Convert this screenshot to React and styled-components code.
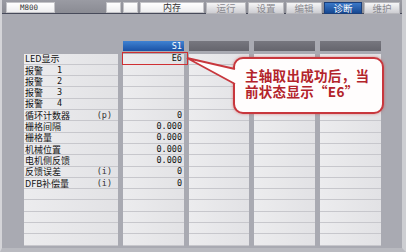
import styled, { createGlobalStyle } from "styled-components";

const GlobalStyle = createGlobalStyle`
  html, body { margin: 0; padding: 0; }
  body {
    width: 406px;
    height: 252px;
    overflow: hidden;
    background: #d6d6da;
    font-family: "Noto Sans CJK SC", "Noto Sans", sans-serif;
  }
`;

const Screen = styled.div`
  position: relative;
  width: 406px;
  height: 252px;
  box-sizing: border-box;
  background: #a9aab2;
  border-left: 2px solid #d4d4d8;
  border-right: 4px solid #cdced2;
  border-bottom: 4px solid #b9bac0;
  display: flex;
  flex-direction: column;
`;

const TopBar = styled.div`
  height: 14px;
  display: flex;
  align-items: flex-start;
  gap: 2px;
  padding: 2px 0 0 4px;
  box-sizing: border-box;
  background: linear-gradient(#9a9ba3, #8a8b93);
  border-bottom: 1px solid #474a5a;
`;

const Plate = styled.div`
  width: ${(p) => p.$w}px;
  height: 11px;
  box-sizing: border-box;
  background: linear-gradient(#ffffff, #ededef);
  border: 1px solid #c4c4c8;
  color: #333;
  font-size: 9px;
  line-height: 9px;
  text-align: ${(p) => (p.$left ? "left" : "center")};
  padding-left: ${(p) => (p.$left ? 13 : 0)}px;
  font-family: ${(p) =>
    p.$left ? '"DejaVu Sans Mono", monospace' : '"Noto Sans CJK SC", sans-serif'};
  ${(p) => p.$left && "font-size: 7.5px; margin-right: 49px;"}
`;

const Tab = styled.div`
  width: ${(p) => p.$w}px;
  height: 12px;
  box-sizing: border-box;
  background: ${(p) =>
    p.$active
      ? "linear-gradient(#3a78c8, #164892)"
      : "linear-gradient(#f6f6f7, #cdcdd2)"};
  border: 1px solid ${(p) => (p.$active ? "#1b3f7a" : "#b8b8bd")};
  color: ${(p) => (p.$active ? "#ffffff" : "#8a8a90")};
  font-size: 9.5px;
  line-height: 10px;
  text-align: center;
`;

const Table = styled.div`
  display: grid;
  grid-template-columns: 94px 61px 60px 61px 61px;
  column-gap: 5px;
  margin: 27px 0 0 22px;
`;

const Column = styled.div`
  display: flex;
  flex-direction: column;
`;

const Head = styled.div`
  height: 10px;
  margin-bottom: 2.6px;
  box-sizing: border-box;
  padding-right: 2px;
  text-align: right;
  color: #fff;
  font-family: "DejaVu Sans Mono", monospace;
  font-size: 8.5px;
  line-height: 10px;
  background: ${(p) =>
    p.$blank
      ? "transparent"
      : p.$active
      ? "linear-gradient(#3f82d2, #1a52a6)"
      : "linear-gradient(#77777f, #65656d)"};
`;

const Row = styled.div`
  position: relative;
  height: 11.3px;
  box-sizing: border-box;
  display: flex;
  align-items: center;
  justify-content: ${(p) => (p.$value ? "flex-end" : "flex-start")};
  padding: 0 2px 0 1px;
  background: linear-gradient(90deg, #ececee, #e2e2e5);
  border-bottom: 1px solid #c7c7cc;
  color: #141414;
  font-size: ${(p) => (p.$value ? 8.5 : 9)}px;
  font-family: ${(p) =>
    p.$value ? '"DejaVu Sans Mono", monospace' : '"Noto Sans CJK SC", sans-serif'};
  line-height: 11px;
  white-space: pre;

  ${(p) =>
    p.$marked &&
    `&::after {
      content: "";
      position: absolute;
      left: -1px;
      top: -2px;
      right: -4px;
      bottom: -1px;
      border: 1.5px solid #cf2f33;
    }`}
`;

const Index = styled.span`
  margin-left: 14px;
  font-family: "DejaVu Sans Mono", monospace;
  font-size: 8.5px;
`;

const Unit = styled.span`
  margin-left: auto;
  margin-right: 4px;
  font-family: "DejaVu Sans Mono", monospace;
  font-size: 8.5px;
  color: #333;
`;

const Bubble = styled.div`
  position: absolute;
  left: 231px;
  top: 57px;
  width: 151px;
  height: 57px;
  box-sizing: border-box;
  padding: 8px 0 0 10px;
  background: #fffdfd;
  border: 2px solid #c8373d;
  border-radius: 10px;
  box-shadow: 0 0 3px rgba(200, 60, 60, 0.55);
  color: #b3242b;
  font-family: "Noto Sans CJK SC", sans-serif;
  font-weight: 700;
  font-size: 13.5px;
  line-height: 16px;
  letter-spacing: 0.3px;
  white-space: nowrap;
`;

const Tail = styled.svg`
  position: absolute;
  left: 178px;
  top: 50px;
  overflow: visible;
`;

const labels = [
  ["LED显示"],
  ["报警", "1"],
  ["报警", "2"],
  ["报警", "3"],
  ["报警", "4"],
  ["循环计数器", null, "(p)"],
  ["栅格间隔"],
  ["栅格量"],
  ["机械位置"],
  ["电机侧反馈"],
  ["反馈误差", null, "(i)"],
  ["DFB补偿量", null, "(i)"],
];

const values = ["E6", "", "", "", "", "0", "0.000", "0.000", "0.000", "0.000", "0", "0"];

const ROWS = 17;

export default function App() {
  const rows = Array.from({ length: ROWS });

  return (
    <>
      <GlobalStyle />
      <Screen>
        <TopBar>
          <Plate $w={49} $left>M800</Plate>
          <Plate $w={15} />
          <Plate $w={15} />
          <Plate $w={64}>内存</Plate>
          <Tab $w={40}>运行</Tab>
          <Tab $w={36}>设置</Tab>
          <Tab $w={36}>编辑</Tab>
          <Tab $w={38} $active>诊断</Tab>
          <Tab $w={36}>维护</Tab>
        </TopBar>

        <Table>
          <Column>
            <Head $blank />
            {rows.map((_, i) => {
              const l = labels[i];
              return (
                <Row key={i}>
                  {l && l[0]}
                  {l && l[1] && <Index>{l[1]}</Index>}
                  {l && l[2] && <Unit>{l[2]}</Unit>}
                </Row>
              );
            })}
          </Column>

          <Column>
            <Head $active>S1</Head>
            {rows.map((_, i) => (
              <Row key={i} $value $marked={i === 0}>
                {values[i] || ""}
              </Row>
            ))}
          </Column>

          {[0, 1, 2].map((c) => (
            <Column key={c}>
              <Head />
              {rows.map((_, i) => (
                <Row key={i} $value />
              ))}
            </Column>
          ))}
        </Table>

        <Bubble>
          主轴取出成功后，当
          <br />
          前状态显示“E6”
        </Bubble>
        <Tail width="60" height="40">
          <polygon points="7,8 56,19 56,34" fill="#fffdfd" />
          <polyline points="55,19 7,8 55,34" fill="none" stroke="#c8373d" strokeWidth="1.8" />
        </Tail>
      </Screen>
    </>
  );
}
